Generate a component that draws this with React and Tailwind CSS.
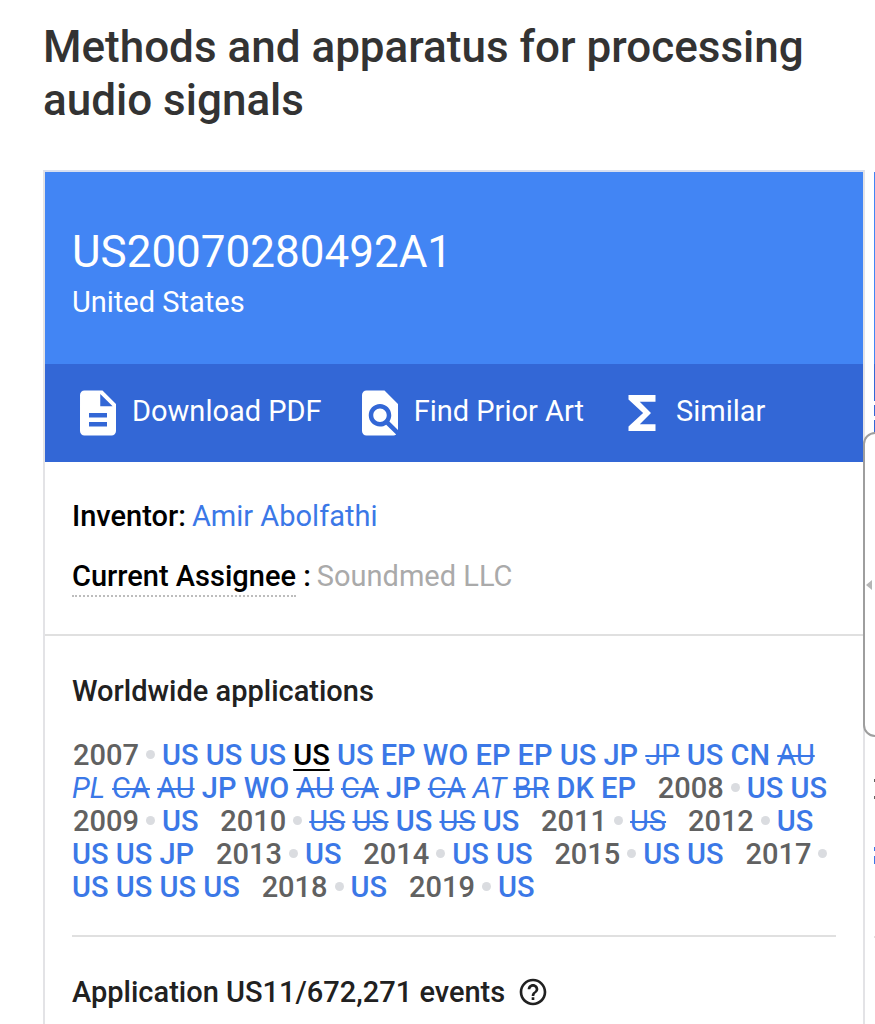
import React from "react";

const YEARS = [
  ["2007", "US US US *US US EP WO EP EP US JP -JP US CN -AU /PL -CA -AU JP WO -AU -CA JP -CA /AT -BR DK EP"],
  ["2008", "US US"],
  ["2009", "US"],
  ["2010", "-US -US US -US US"],
  ["2011", "-US"],
  ["2012", "US US US JP"],
  ["2013", "US"],
  ["2014", "US US"],
  ["2015", "US US"],
  ["2017", "US US US US"],
  ["2018", "US"],
  ["2019", "US"],
];

const STYLES = {
  "*": "text-black font-medium underline decoration-2 underline-offset-4",
  "-": "font-normal line-through decoration-2",
  "/": "font-normal italic",
};

function Country({ code }) {
  const style = STYLES[code[0]];
  return (
    <a href="#application" className={style || "font-medium"}>
      {style ? code.slice(1) : code}
    </a>
  );
}

function Action({ children, label }) {
  return (
    <button type="button" className="flex items-center gap-[7px]">
      <svg viewBox="0 0 24 24" className="mt-1 size-[54px] shrink-0" fill="currentColor" aria-hidden="true">
        {children}
      </svg>
      <span>{label}</span>
    </button>
  );
}

export default function App() {
  return (
    <div className="relative flex h-screen flex-col overflow-hidden bg-white font-[Roboto,sans-serif] text-[29px] leading-8 text-[#212121]">
      <h1 className="px-[43px] pt-[21px] text-[44px] font-medium leading-[53px] text-[#333333]">
        Methods and apparatus for processing audio signals
      </h1>

      <div className="mt-[43px] flex flex-1 pl-[43px]">
        <main className="min-w-0 flex-1 border-x-2 border-t-2 border-[#e3e3e6] border-t-[#d8dff0]">
          <header className="bg-[#4285f4] text-white">
            <div className="h-48 px-[27px] pt-[54px]">
              <h2 className="text-[44px] leading-[52px]">US20070280492A1</h2>
              <p className="mt-2">United States</p>
            </div>
            <div className="flex h-[98px] items-center gap-[31px] bg-[#3367d6] pl-[26px] pb-1">
              <Action label="Download PDF">
                <path d="M14 2H6c-1.100 0-1.990.9-1.990 2L4 20c0 1.100.89 2 1.990 2H18c1.100 0 2-.9 2-2V8l-6-6zm2 16H8v-2h8v2zm0-4H8v-2h8v2zm-3-5V3.500L18.500 9H13z" />
              </Action>
              <Action label="Find Prior Art">
                <path d="M20 19.590V8l-6-6H6c-1.100 0-1.990.9-1.990 2L4 20c0 1.100.89 2 1.990 2H18c.45 0 .85-.15 1.190-.4l-4.430-4.430c-.8.52-1.740.83-2.760.83-2.760 0-5-2.240-5-5s2.240-5 5-5 5 2.240 5 5c0 1.020-.31 1.960-.83 2.750L20 19.590zM9 13c0 1.660 1.340 3 3 3s3-1.340 3-3-1.340-3-3-3-3 1.340-3 3z" />
              </Action>
              <Action label="Similar">
                <path d="M18 4H6v2l6.500 6L6 18v2h12v-3h-7l5-5-5-5h7z" />
              </Action>
            </div>
          </header>

          <dl className="flex flex-col gap-7 border-b-2 border-[#e0e0e0] px-[27px] pt-[38px] pb-[42px]">
            <div className="flex gap-1.5">
              <dt className="font-medium text-black">Inventor:</dt>
              <dd>
                <a href="#inventor" className="text-[#3b78e7]">Amir Abolfathi</a>
              </dd>
            </div>
            <div className="flex gap-1.5">
              <dt className="font-medium text-black">
                <span className="border-b-2 border-dotted border-[#bdbdbd] pb-0.5">Current Assignee</span> :
              </dt>
              <dd className="text-[#aaaaaa]">Soundmed LLC</dd>
            </div>
          </dl>

          <div className="px-[27px]">
            <section className="border-b-2 border-[#e0e0e0] pt-[39px] pb-[31px]">
              <h3 className="font-medium">Worldwide applications</h3>
              <p className="mt-8 leading-[33px] text-[#3b78e7]">
                {YEARS.map(([year, codes]) => (
                  <React.Fragment key={year}>
                    <span className="ml-px text-[#616161] font-medium">{year}</span>
                    <span className="mx-[7px] inline-block size-[9px] -translate-y-1.5 rounded-full bg-[#dadce0]" />
                    {codes.split(" ").map((code, i) => (
                      <React.Fragment key={i}>
                        {i > 0 && " "}
                        <Country code={code} />
                      </React.Fragment>
                    ))}
                    <span className="whitespace-pre-wrap text-[28px]">{"   "}</span>
                  </React.Fragment>
                ))}
              </p>
            </section>
            <section className="flex items-center gap-3 pt-[39px]">
              <h3 className="font-medium">Application US11/672,271 events</h3>
              <button type="button" aria-label="About these events">
                <svg viewBox="0 0 24 24" className="size-8" fill="currentColor" aria-hidden="true">
                  <path d="M11 18h2v-2h-2v2zm1-16C6.480 2 2 6.480 2 12s4.480 10 10 10 10-4.480 10-10S17.520 2 12 2zm0 18c-4.410 0-8-3.590-8-8s3.590-8 8-8 8 3.590 8 8-3.590 8-8 8zm0-14c-2.210 0-4 1.790-4 4h2c0-1.100.9-2 2-2s2 .9 2 2c0 2-3 1.750-3 5h2c0-2.250 3-2.500 3-5 0-2.210-1.790-4-4-4z" />
                </svg>
              </button>
            </section>
          </div>
        </main>
        <aside className="ml-[9px] w-px shrink-0 pt-0.5">
          <div className="h-48 bg-[#4285f4]" />
          <div className="flex h-[98px] flex-col gap-[11px] bg-[#3367d6] pt-[37px]">
            <div className="h-1 bg-white" />
            <div className="h-1 bg-white" />
          </div>
          <div className="mt-[317px] h-[3px] bg-[#616161]" />
          <div className="mt-[14px] h-[3px] bg-[#616161]" />
          <div className="mt-[48px] h-1 bg-[#3b78e7]" />
          <div className="mt-[5px] h-2 bg-[#3b78e7]" />
          <div className="mt-[72px] h-0.5 bg-[#e0e0e0]" />
        </aside>
      </div>

      <button
        type="button"
        aria-label="Expand panel"
        className="absolute top-[432px] -right-3 flex h-[305px] w-6 items-center rounded-xl border-2 border-[#9e9e9e] bg-white pl-px"
      >
        <svg viewBox="0 0 6 10" className="h-2.5 w-1.5" fill="#b5b5b5" aria-hidden="true">
          <path d="M6 0v10L0 5z" />
        </svg>
      </button>
    </div>
  );
}
